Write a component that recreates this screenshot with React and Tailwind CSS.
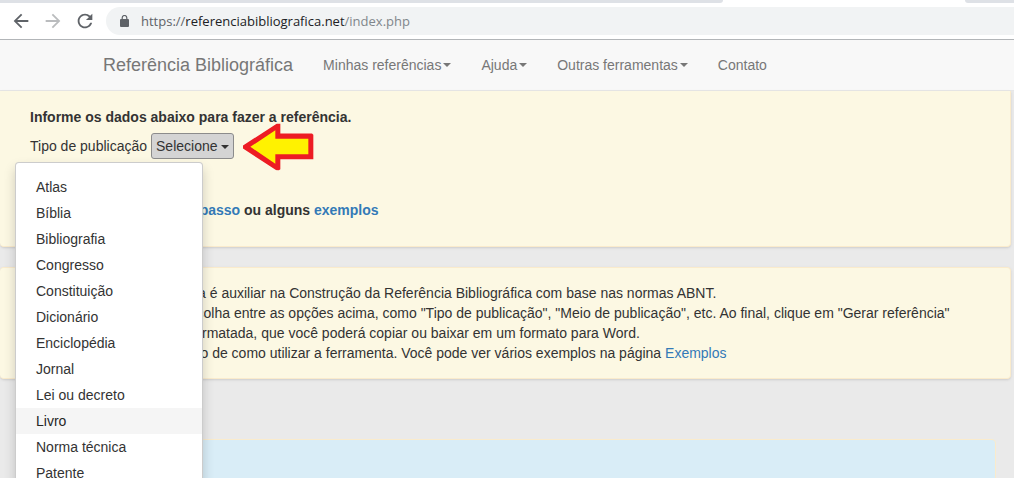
import React, { useState } from 'react';
import { MdArrowBack, MdArrowForward, MdRefresh } from 'react-icons/md';

const navItems = [
  { label: 'Minhas referências', dropdown: true },
  { label: 'Ajuda', dropdown: true },
  { label: 'Outras ferramentas', dropdown: true },
  { label: 'Contato', dropdown: false },
];

const publicationTypes = [
  'Atlas',
  'Bíblia',
  'Bibliografia',
  'Congresso',
  'Constituição',
  'Dicionário',
  'Enciclopédia',
  'Jornal',
  'Lei ou decreto',
  'Livro',
  'Norma técnica',
  'Patente',
];

const Caret = () => (
  <span className="inline-block align-middle border-t-4 border-t-current border-x-4 border-x-transparent" />
);

const LockIcon = () => (
  <svg className="w-[9px] h-3" viewBox="0 0 9 12" fill="none" aria-hidden="true">
    <rect x="0" y="4" width="9" height="8" rx="1" fill="currentColor" />
    <path d="M2.2 4.5V2.8a2.3 2.3 0 0 1 4.6 0v1.7" stroke="currentColor" strokeWidth="1.2" />
  </svg>
);

const BrowserBar = () => (
  <header className="bg-white border-b border-[#b2b5b8]">
    <div className="flex h-[3px]">
      <div className="w-[723px] bg-[#dee1e6] rounded-br-md" />
      <div className="w-[242px]" />
      <div className="flex-1 bg-[#dee1e6] rounded-bl-md" />
    </div>
    <div className="flex items-center gap-2.5 pl-2.5 py-1 text-[#5f6368]">
      <button aria-label="Voltar">
        <MdArrowBack className="w-[22px] h-[22px]" />
      </button>
      <button aria-label="Avançar" className="text-[#babcbe]">
        <MdArrowForward className="w-[22px] h-[22px]" />
      </button>
      <button aria-label="Recarregar">
        <MdRefresh className="w-[22px] h-[22px]" />
      </button>
      <div className="flex-1 flex items-center gap-3 h-7 pl-3.5 rounded-l-full bg-[#f1f3f4]">
        <LockIcon />
        <span className="font-['Open_Sans',sans-serif] text-[13px] text-[#80868b] whitespace-nowrap">
          <span className="text-[#5f6368]">https://</span>
          <span className="text-[#202124]">referenciabibliografica.net</span>
          /index.php
        </span>
      </div>
    </div>
  </header>
);

const Navbar = () => (
  <nav className="flex items-center h-[51px] pl-[88px] bg-[#f8f8f8] border-b border-[#e7e7e7] text-[#777]">
    <a href="#" className="px-[15px] text-lg leading-5">Referência Bibliográfica</a>
    <ul className="flex">
      {navItems.map((item) => (
        <li key={item.label}>
          <a href="#" className="flex items-center gap-0.5 px-[15px] py-[15px] whitespace-nowrap">
            {item.label}
            {item.dropdown && <Caret />}
          </a>
        </li>
      ))}
    </ul>
  </nav>
);

const PointerArrow = () => (
  <svg
    className="absolute left-full top-1/2 -translate-y-1/2 ml-[9px] mt-px w-[71px] h-[47px]"
    viewBox="38 27 213 141"
    aria-hidden="true"
  >
    <polygon
      fill="#ed1c24"
      points="38,93 140,27 150,27 150,57 245,57 249,61 249,134 150,134 150,164 145,168 138,167 38,102"
    />
    <polygon fill="#fff200" points="60,97 135,47 135,73 234,73 234,119 135,119 135,148" />
  </svg>
);

const App = () => {
  const [open, setOpen] = useState(true);
  const [selected, setSelected] = useState('Livro');

  return (
    <div className="h-screen overflow-hidden bg-[#eaeaea] font-['Liberation_Sans',Arial,sans-serif] text-sm leading-5 text-[#333]">
      <BrowserBar />
      <Navbar />

      <main className="mr-[3px]">
        <section className="relative pl-[30px] pr-4 pt-4 pb-[26px] bg-[#fcf8e3] border-b border-r border-[#faebcc] rounded-b shadow-sm">
          <p className="font-bold">Informe os dados abaixo para fazer a referência.</p>
          <div className="flex items-center gap-1 mt-1.5">
            <span id="tipo-label">Tipo de publicação</span>
            <div className="relative">
              <button
                id="tipo-button"
                onClick={() => setOpen(!open)}
                aria-labelledby="tipo-label tipo-button"
                aria-expanded={open}
                className="block h-[26px] px-1 bg-[#d4d4d4] border border-[#8c8c8c] rounded-[3px] whitespace-nowrap"
              >
                Selecione <Caret />
              </button>
              <PointerArrow />
            </div>
          </div>
          <p className="mt-[41px] font-bold">
            Se quiser, veja o <a href="#" className="text-[#337ab7]">passo a passo</a> ou alguns{' '}
            <a href="#" className="text-[#337ab7]">exemplos</a>
          </p>

          {open && (
            <ul className="absolute z-10 top-[71px] left-[15px] w-[188px] py-[11px] bg-white border border-black/20 rounded shadow-[0_6px_12px_rgba(0,0,0,0.18)]">
              {publicationTypes.map((type) => (
                <li key={type}>
                  <a
                    href="#"
                    onClick={() => setSelected(type)}
                    className={`block px-5 py-[3px] ${type === selected ? 'bg-[#f5f5f5] text-[#262626]' : ''}`}
                  >
                    {type}
                  </a>
                </li>
              ))}
            </ul>
          )}
        </section>

        <section className="mt-5 pl-[30px] pr-4 py-[15px] bg-[#fcf8e3] border-y border-r border-[#faebcc] rounded shadow-sm">
          <p>O objetivo dessa ferramenta é auxiliar na Construção da Referência Bibliográfica com base nas normas ABNT.</p>
          <p>
            Para gerar a referência, escolha entre as opções acima, como "Tipo de publicação", "Meio de publicação", etc. Ao final, clique em "Gerar referência"
          </p>
          <p>para obter sua referência formatada, que você poderá copiar ou baixar em um formato para Word.</p>
          <p>
            Veja abaixo o passo a passo de como utilizar a ferramenta. Você pode ver vários exemplos na página{' '}
            <a href="#" className="text-[#337ab7]">Exemplos</a>
          </p>
        </section>

        <section className="mt-[60px] mx-[15px] h-40 bg-[#d9edf7] border border-[#faebcc] rounded" />
      </main>
    </div>
  );
};

export default App;
